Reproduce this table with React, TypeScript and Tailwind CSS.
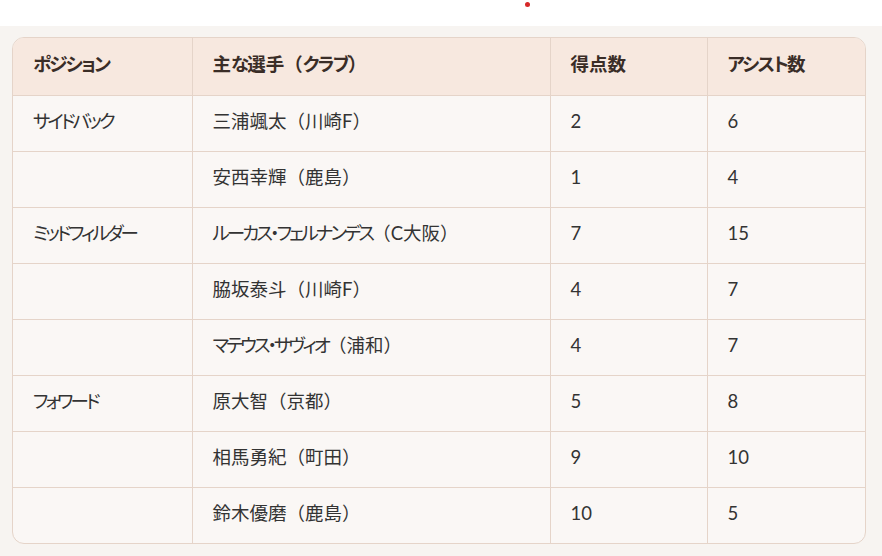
const rows = [
  { position: "サイドバック", player: "三浦颯太（川崎F）", goals: "2", assists: "6" },
  { position: "", player: "安西幸輝（鹿島）", goals: "1", assists: "4" },
  { position: "ミッドフィルダー", player: "ルーカス・フェルナンデス（C大阪）", goals: "7", assists: "15" },
  { position: "", player: "脇坂泰斗（川崎F）", goals: "4", assists: "7" },
  { position: "", player: "マテウス・サヴィオ（浦和）", goals: "4", assists: "7" },
  { position: "フォワード", player: "原大智（京都）", goals: "5", assists: "8" },
  { position: "", player: "相馬勇紀（町田）", goals: "9", assists: "10" },
  { position: "", player: "鈴木優磨（鹿島）", goals: "10", assists: "5" },
];

const headers = ["ポジション", "主な選手（クラブ）", "得点数", "アシスト数"];

// kana runs are set tighter, kanji and brackets keep full width
const Jp = ({ text, bold }: { text: string; bold?: boolean }) => {
  const parts = text.match(/[\u3040-\u30ff]+|[^\u3040-\u30ff]+/g) ?? [];
  return (
    <>
      {parts.map((p, i) =>
        /[\u3040-\u30ff]/.test(p) ? (
          <span
            key={i}
            className={`[font-feature-settings:'palt'] ${
              bold ? "tracking-[-1.8px]" : "tracking-[-2.9px]"
            }`}
          >
            {p}
          </span>
        ) : (
          <span key={i}>{p}</span>
        )
      )}
    </>
  );
};

export default function App() {
  return (
    <div className="w-[882px] h-[556px] overflow-hidden bg-[#f7f4f1] font-['Lato','Noto_Sans_CJK_JP',sans-serif]">
      <div className="h-[26px] bg-white flex">
        <span className="ml-[525px] mt-[2px] w-[5px] h-[5px] rounded-full bg-[#d62828]" />
      </div>
      <div className="pl-3 pr-4 pt-[11px]">
        <div className="rounded-xl border border-[#e5d4c9] overflow-hidden bg-[#faf7f5]">
          <table className="w-full table-fixed border-collapse text-[18.5px] leading-6">
            <colgroup>
              <col className="w-[179px]" />
              <col className="w-[358px]" />
              <col className="w-[157px]" />
              <col />
            </colgroup>
            <thead>
              <tr className="bg-[#f7e8df] h-[57px]">
                {headers.map((h, i) => (
                  <th
                    key={h}
                    className={`text-left font-bold text-[#3a2d27] px-5 pb-1 border-b border-[#e5d4c9] ${
                      i > 0 ? "border-l" : ""
                    }`}
                  >
                    <Jp text={h} bold />
                  </th>
                ))}
              </tr>
            </thead>
            <tbody>
              {rows.map((r, idx) => (
                <tr
                  key={r.player}
                  className={`h-[56px] text-[#333333] ${
                    idx < rows.length - 1 ? "border-b border-[#e5d4c9]" : ""
                  }`}
                >
                  <td className="px-5 pb-1">
                    <Jp text={r.position} />
                  </td>
                  <td className="px-5 pb-1 border-l border-[#e5d4c9]">
                    <Jp text={r.player} />
                  </td>
                  <td className="px-5 pb-1 border-l border-[#e5d4c9]">{r.goals}</td>
                  <td className="px-5 pb-1 border-l border-[#e5d4c9]">{r.assists}</td>
                </tr>
              ))}
            </tbody>
          </table>
        </div>
      </div>
    </div>
  );
}
